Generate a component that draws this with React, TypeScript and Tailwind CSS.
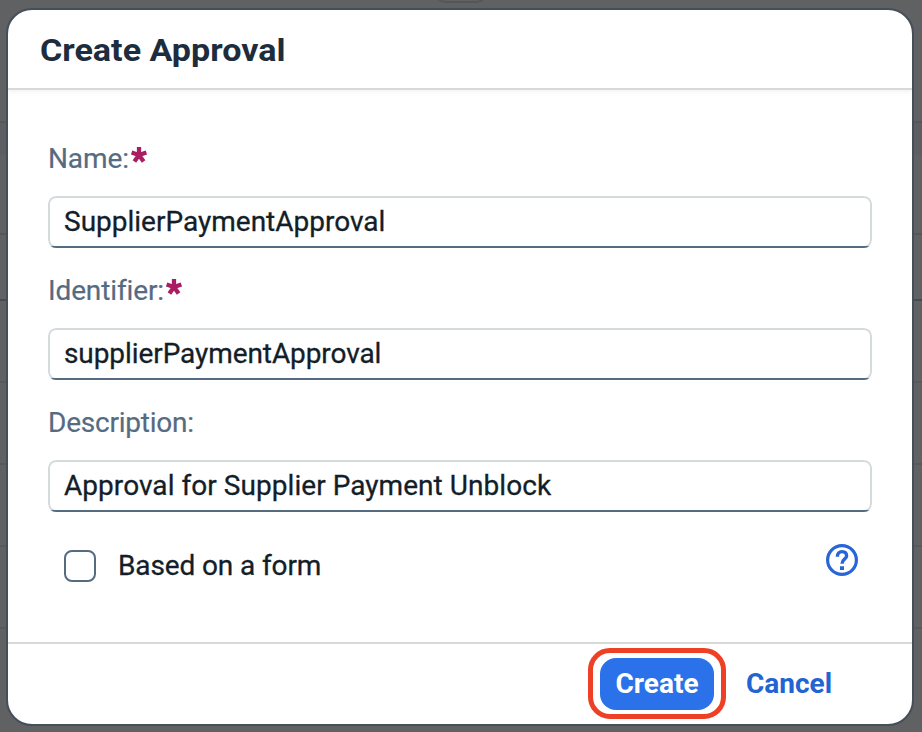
import React from "react";

type FieldProps = { label: string; required?: boolean; value: string; labelClass: string; valueClass: string };

function Asterisk() {
  return (
    <svg className="ml-0.5 mt-[5px] h-4 w-4" viewBox="0 0 16 16" fill="none" stroke="#aa1d63" strokeWidth="4.3">
      <path d="M8 8V0M8 8L.6 5.5M8 8L15.4 5.5M8 8L3.4 14.6M8 8L12.6 14.6" />
    </svg>
  );
}

function Field({ label, required, value, labelClass, valueClass }: FieldProps) {
  return (
    <div className="flex h-[132px] flex-col">
      <div className="flex h-[54px] items-start text-[28px] leading-[34px] text-[#556b82] [-webkit-text-stroke:0.2px]">
        <span className={labelClass}>{label}</span>
        {required && <Asterisk />}
      </div>
      <div className="relative h-[52px] overflow-hidden rounded-lg">
        <div className="flex h-full items-center rounded-lg border-2 border-[#d5dadd] pl-3.5 text-[28px] leading-[34px] text-[#131e29] [-webkit-text-stroke:0.3px]">
          <span className={valueClass}>{value}</span>
        </div>
        <div className="absolute inset-x-0 bottom-0 h-0.5 bg-[#556b82]" />
      </div>
    </div>
  );
}

function Backdrop() {
  return (
    <div className="flex h-full flex-col">
      <div className="flex h-[123px] justify-center border-b-2 border-[#555658]">
        <div className="-mt-8 h-[35px] w-[54px] rounded-xl border-2 border-[#555658]" />
      </div>
      <div className="h-8 bg-[#5d5e62]" />
      <div className="h-20 border-b-2 border-[#555658]" />
      <div className="h-[66px] border-b-2 border-[#464b54]" />
      <div className="h-[82px] border-b-2 border-[#58595b]" />
      <div className="h-[82px] border-b-2 border-[#58595b]" />
      <div className="h-[82px] border-b-2 border-[#58595b]" />
      <div className="h-[82px] border-b-2 border-[#58595b]" />
    </div>
  );
}

export default function App() {
  return (
    <div className="relative h-[732px] w-[922px] overflow-hidden bg-[#606163] font-['Roboto','Liberation_Sans',sans-serif]">
      <Backdrop />
      <div className="absolute left-1.5 top-2 flex h-[718px] w-[908px] flex-col overflow-hidden rounded-[26px] border-2 border-[#454e5b] bg-white">
        <header className="flex h-20 shrink-0 items-center border-b-2 border-[#d9d9d9] pl-8 pt-0.5 shadow-[0_2px_5px_rgba(0,0,0,0.05)]">
          <h1 className="origin-left scale-x-[1.065] text-[32px] font-bold leading-10 text-[#1d2d3e]">Create Approval</h1>
        </header>
        <main className="flex flex-1 flex-col px-10 pt-[52px]">
          <Field label="Name:" required value="SupplierPaymentApproval" labelClass="tracking-[-0.1px]" valueClass="" />
          <Field label="Identifier:" required value="supplierPaymentApproval" labelClass="tracking-[-0.13px]" valueClass="tracking-[-0.08px]" />
          <Field label="Description:" value="Approval for Supplier Payment Unblock" labelClass="tracking-[-0.22px]" valueClass="tracking-[0.05px]" />
          <div className="flex items-start pl-4 pt-3">
            <div className="h-8 w-8 rounded-lg border-2 border-[#556b82]" />
            <span className="ml-[22px] -mt-px text-[28px] leading-[34px] tracking-[-0.12px] text-[#131e29] [-webkit-text-stroke:0.3px]">Based on a form</span>
            <svg className="-mt-1.5 ml-auto mr-3.5 h-8 w-8" viewBox="0 0 32 32" fill="none" stroke="#2765d8">
              <circle cx="16" cy="16" r="14.4" strokeWidth="3.2" />
              <path d="M11.4 12.8C11.4 9.4 13.3 7.6 16.1 7.6S20.6 9.4 20.6 12C20.6 15.5 16 15 16 19.8" strokeWidth="3.4" />
              <path d="M16 22.2V26" strokeWidth="4" />
            </svg>
          </div>
        </main>
        <footer className="flex h-[82px] shrink-0 items-start border-t-2 border-[#d9d9d9] pl-[580px] pt-1 text-[28px] font-bold leading-[34px]">
          <div className="flex h-[71px] w-[138px] items-center justify-center rounded-[22px] border-[5px] border-[#ee4024]">
            <button className="h-[52px] w-[114px] rounded-2xl bg-[#2b72ea] text-white">Create</button>
          </div>
          <button className="ml-5 mt-[19px] text-[#2264d1]">Cancel</button>
        </footer>
      </div>
    </div>
  );
}
